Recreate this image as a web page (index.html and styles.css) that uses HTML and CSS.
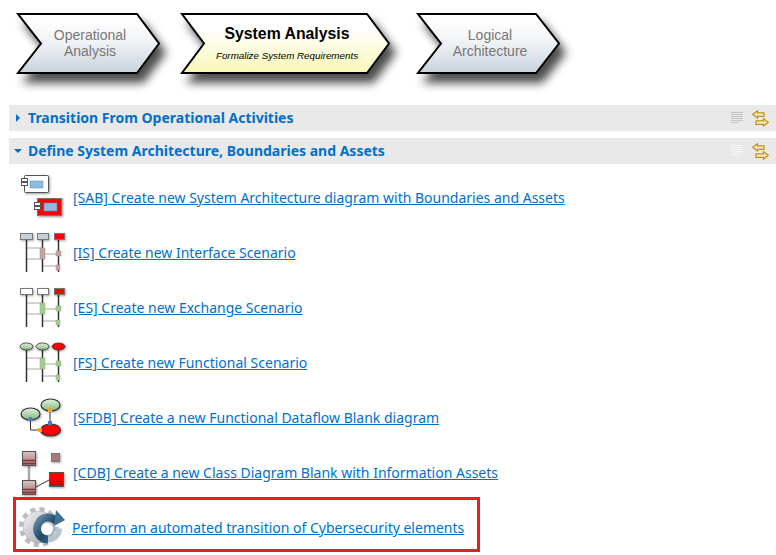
FILE: index.html
```html
<!DOCTYPE html>
<html lang="en">

<head>
    <meta charset="UTF-8">
    <title>System Analysis</title>
    <link rel="stylesheet" href="styles.css">
</head>

<body>
    <!-- shared gradients -->
    <svg class="defs" width="0" height="0">
        <defs>
            <linearGradient id="grey" x1="0" y1="0" x2="0" y2="1">
                <stop offset="0.1" stop-color="#ffffff" />
                <stop offset="0.45" stop-color="#f2f4f7" />
                <stop offset="1" stop-color="#c9d2dc" />
            </linearGradient>
            <linearGradient id="yellow" x1="0" y1="0" x2="0" y2="1">
                <stop offset="0.25" stop-color="#ffffff" />
                <stop offset="1" stop-color="#f9f7b6" />
            </linearGradient>
            <linearGradient id="green" x1="0" y1="0" x2="0" y2="1">
                <stop offset="0" stop-color="#e6f3e0" />
                <stop offset="1" stop-color="#7fb777" />
            </linearGradient>
            <linearGradient id="brown" x1="0" y1="0" x2="0" y2="1">
                <stop offset="0" stop-color="#d9c3c3" />
                <stop offset="1" stop-color="#a06f6f" />
            </linearGradient>
            <linearGradient id="steel" x1="0" y1="0" x2="1" y2="1">
                <stop offset="0" stop-color="#f4f5f6" />
                <stop offset="1" stop-color="#9a9ea4" />
            </linearGradient>
            <linearGradient id="spin" x1="0" y1="0" x2="1" y2="1">
                <stop offset="0" stop-color="#6a8fa8" />
                <stop offset="0.5" stop-color="#1f4a68" />
                <stop offset="1" stop-color="#3f6f92" />
            </linearGradient>
        </defs>
    </svg>

    <div class="stages">
        <svg class="stage" width="143" height="61" viewBox="0 0 143 61">
            <polygon class="chevron" fill="url(#grey)" points="1,1 120,1 142,30.500 120,60 1,60 24,30.500" />
            <text class="stage-name" x="73" y="27">Operational</text>
            <text class="stage-name" x="73" y="43">Analysis</text>
        </svg>
        <svg class="stage" width="209" height="61" viewBox="0 0 209 61">
            <polygon class="chevron" fill="url(#yellow)" points="1,1 186,1 208,30.500 186,60 1,60 23,30.500" />
            <text class="stage-name stage-name--active" x="106" y="26">System Analysis</text>
            <text class="stage-sub" x="106" y="46">Formalize System Requirements</text>
        </svg>
        <svg class="stage" width="143" height="61" viewBox="0 0 143 61">
            <polygon class="chevron" fill="url(#grey)" points="1,1 119,1 142,30.500 119,60 1,60 24,30.500" />
            <text class="stage-name" x="73" y="27">Logical</text>
            <text class="stage-name" x="73" y="43">Architecture</text>
        </svg>
    </div>

    <div class="section">
        <svg class="twistie" width="8" height="10" viewBox="0 0 8 10">
            <polygon points="2,1 6,5 2,9" />
        </svg>
        <span class="section-title">Transition From Operational Activities</span>
        <svg class="lines" width="13" height="12" viewBox="0 0 13 12">
            <path d="M0 .5h12M0 2.500h12M0 4.500h12M0 6.500h12M0 8.500h12M0 10.500h8" />
        </svg>
        <svg class="swap" width="17" height="17" viewBox="0 0 17 17">
            <path d="M.8 4.300 5.500.8v2h6.500v3.500H5.500v1.800z" />
            <path d="M16.200 12.300 11.500 8.800v2H4v3.500h7.500v1.800z" />
        </svg>
    </div>

    <div class="section">
        <svg class="twistie" width="8" height="10" viewBox="0 0 8 10">
            <polygon points="0,3 8,3 4,7" />
        </svg>
        <span class="section-title">Define System Architecture, Boundaries and Assets</span>
        <svg class="lines lines--faded" width="13" height="12" viewBox="0 0 13 12">
            <path d="M0 .5h12M0 2.500h12M0 4.500h12M0 6.500h12M0 8.500h12M0 10.500h8" />
        </svg>
        <svg class="swap" width="17" height="17" viewBox="0 0 17 17">
            <path d="M.8 4.300 5.500.8v2h6.500v3.500H5.500v1.800z" />
            <path d="M16.200 12.300 11.500 8.800v2H4v3.500h7.500v1.800z" />
        </svg>
    </div>

    <ul class="actions">
        <li class="action">
            <svg class="icon" width="52" height="49" viewBox="0 0 52 49">
                <rect class="comp" x="7.500" y="2.500" width="24" height="17" rx="1" fill="#fff" />
                <rect class="comp-inner" x="13" y="8" width="13" height="7" />
                <rect class="comp-tab" x="4.500" y="5.500" width="6" height="3" />
                <rect class="comp-tab" x="4.500" y="9.500" width="6" height="3" />
                <rect class="comp comp--red" x="20.500" y="25.500" width="24" height="17" />
                <rect class="comp-inner" x="27" y="30" width="13" height="8" />
                <rect class="comp-tab" x="17.500" y="29.500" width="6" height="3" />
                <rect class="comp-tab" x="17.500" y="33.500" width="6" height="3" />
            </svg>
            <a href="#">[SAB] Create new System Architecture diagram with Boundaries and Assets</a>
        </li>
        <li class="action">
            <svg class="icon" width="52" height="49" viewBox="0 0 52 49">
                <path class="msg" d="M9.500 20h16M9.500 31h16M25.500 26h16M25.500 38h16" />
                <path class="life" d="M9.500 10v34M25.500 10v34M41.500 10v34" />
                <rect class="head" x="3.500" y="5.500" width="12" height="6" fill="#c6d0d8" />
                <rect class="head" x="20.500" y="5.500" width="11" height="6" fill="#c6d0d8" />
                <rect class="head head--red" x="37.500" y="5.500" width="10" height="6" />
                <rect class="bar bar--brown" x="23" y="20" width="5" height="11" />
                <rect class="bar bar--brown" x="39" y="23" width="5" height="5" />
                <rect class="bar bar--brown" x="39" y="37" width="4" height="5" />
            </svg>
            <a href="#">[IS] Create new Interface Scenario</a>
        </li>
        <li class="action">
            <svg class="icon" width="52" height="49" viewBox="0 0 52 49">
                <path class="msg" d="M9.500 20h16M9.500 31h16M25.500 26h16M25.500 38h16" />
                <path class="life" d="M9.500 10v34M25.500 10v34M41.500 10v34" />
                <rect class="head" x="3.500" y="5.500" width="12" height="6" fill="#fff" />
                <rect class="head" x="20.500" y="5.500" width="11" height="6" fill="#fff" />
                <rect class="head head--red" x="37.500" y="5.500" width="10" height="6" />
                <rect class="bar" x="23" y="20" width="5" height="11" />
                <rect class="bar" x="39" y="23" width="5" height="5" />
                <rect class="bar" x="39" y="37" width="4" height="5" />
            </svg>
            <a href="#">[ES] Create new Exchange Scenario</a>
        </li>
        <li class="action">
            <svg class="icon" width="52" height="49" viewBox="0 0 52 49">
                <path class="msg" d="M9.500 20h16M9.500 31h16M25.500 26h16M25.500 38h16" />
                <path class="life" d="M9.500 10v34M25.500 10v34M41.500 10v34" />
                <ellipse class="oval" cx="9.500" cy="8.500" rx="6.500" ry="3.500" fill="url(#green)" />
                <ellipse class="oval" cx="25.500" cy="8.500" rx="6.500" ry="3.500" fill="url(#green)" />
                <ellipse class="oval" cx="41.500" cy="8.500" rx="6.500" ry="3.500" fill="#f00" />
                <rect class="bar" x="23" y="20" width="5" height="11" />
                <rect class="bar" x="39" y="23" width="5" height="5" />
                <rect class="bar" x="39" y="37" width="4" height="5" />
            </svg>
            <a href="#">[FS] Create new Functional Scenario</a>
        </li>
        <li class="action">
            <svg class="icon" width="52" height="49" viewBox="0 0 52 49">
                <path class="link" d="M13.500 26v11H23M33 17v13" />
                <ellipse class="oval oval--big" cx="13.500" cy="21" rx="9.500" ry="6" fill="url(#green)" />
                <ellipse class="oval oval--big" cx="33.500" cy="12" rx="9.500" ry="6" fill="url(#green)" />
                <ellipse class="oval oval--big" cx="33.500" cy="37" rx="10" ry="6" fill="#f00" />
                <rect class="port port--blue" x="11.500" y="24" width="4" height="4" />
                <rect class="port port--blue" x="31" y="28" width="4" height="4" />
                <rect class="port" x="31" y="15" width="4" height="4" />
                <rect class="port" x="21" y="35" width="4" height="4" />
            </svg>
            <a href="#">[SFDB] Create a new Functional Dataflow Blank diagram</a>
        </li>
        <li class="action">
            <svg class="icon" width="52" height="49" viewBox="0 0 52 49">
                <path class="class-link" d="M12 18v14" />
                <path class="link" d="M19 39 32 32" />
                <rect class="class-box" x="5.500" y="3.500" width="13" height="14" fill="url(#brown)" />
                <path class="class-rows" d="M6 12.500h12M6 15.500h12" />
                <rect class="class-box" x="5.500" y="32.500" width="13" height="14" fill="url(#brown)" />
                <path class="class-rows" d="M6 41.500h12M6 44.500h12" />
                <rect class="class-box class-box--small" x="34.500" y="5.500" width="8" height="8" fill="#a57b7b" />
                <rect class="class-box" x="32.500" y="24.500" width="14" height="14" fill="#f00" />
                <path class="class-rows class-rows--red" d="M33 33.500h13M33 36.500h13" />
            </svg>
            <a href="#">[CDB] Create a new Class Diagram Blank with Information Assets</a>
        </li>
        <li class="action action--marked">
            <svg class="icon" width="52" height="49" viewBox="0 0 52 49">
                <circle class="gear-teeth" cx="22" cy="24" r="17.500" />
                <circle class="gear-body" cx="22" cy="24" r="16" />
                <path class="gear-back" d="M31 36.500A11 11 0 0 0 42 25.500" />
                <path class="gear-spin" d="M31 36.500A11 11 0 1 1 40 19" />
                <polygon class="gear-head" points="39,7 48,17 37,23" />
                <circle class="gear-eye" cx="30" cy="26" r="6" />
            </svg>
            <a href="#">Perform an automated transition of Cybersecurity elements</a>
        </li>
    </ul>
</body>

</html>
```

FILE: styles.css
```css
* {
    margin: 0;
    padding: 0;
}

body {
    background-color: #ffffff;
    font-family: "Noto Sans", "Open Sans", sans-serif;
    overflow: hidden;
}

.defs {
    position: absolute;
}

/* chevrons on top */
.stages {
    display: flex;
    gap: 21px;
    padding: 13px 0 0 17px;
    margin-bottom: 31px;
}

.stage {
    display: block;
    overflow: visible;
}

.stage:nth-child(2) {
    margin-right: 6px;
}

.chevron {
    stroke: #000000;
    stroke-width: 2;
    filter: drop-shadow(6px 9px 5px rgba(0, 0, 0, 0.7));
}

.stage text {
    font-family: "Liberation Sans", Arial, sans-serif;
    text-anchor: middle;
}

.stage-name {
    font-size: 14px;
    fill: #777777;
}

.stage-name--active {
    font-size: 15.800px;
    font-weight: bold;
    fill: #000000;
}

.stage-sub {
    font-size: 9.800px;
    font-style: italic;
    fill: #000000;
}

/* section bars */
.section {
    display: flex;
    align-items: center;
    height: 26px;
    margin: 0 0 7px 9px;
    background-color: #e9e9e9;
}

.section-title {
    flex: 1;
    font-size: 14px;
    font-weight: bold;
    color: #0070cc;
    margin: 0 0 2px 6px;
}

.twistie {
    margin-left: 5px;
    fill: #0070cc;
}

.lines {
    fill: none;
    stroke: #c4c4c4;
    stroke-width: 1;
    margin-right: 8px;
}

.lines--faded {
    stroke: #f4f4f4;
}

.swap {
    fill: #fdeec4;
    stroke: #c98a14;
    stroke-width: 1.200;
    margin-right: 7px;
}

/* action rows */
.actions {
    list-style: none;
    margin-top: -1px;
}

.action {
    display: flex;
    align-items: center;
    height: 55px;
    padding-left: 17px;
    position: relative;
}

.action a {
    margin-left: 4px;
    font-size: 14px;
    color: #0070cc;
}

.action--marked a {
    margin-left: 3px;
}

.icon {
    flex: none;
}

/* box lying over the last row */
.action--marked::after {
    content: "";
    position: absolute;
    left: 13px;
    top: -3px;
    width: 461px;
    height: 49px;
    border: 3px solid #ed1c24;
}

.comp {
    stroke: #555555;
    filter: drop-shadow(1px 1px 1px rgba(0, 0, 0, 0.4));
}

.comp--red {
    fill: #ff0000;
    stroke: #777777;
}

.comp-inner {
    fill: #8dbbdf;
    stroke: #5d8db3;
    stroke-width: 0.5;
}

.comp-tab {
    fill: #ffffff;
    stroke: #555555;
}

.life {
    fill: none;
    stroke: #333333;
    stroke-width: 1.500;
}

.msg {
    fill: none;
    stroke: #a8a8a8;
    stroke-width: 1;
}

.head {
    stroke: #777777;
    filter: drop-shadow(1px 1px 1px rgba(0, 0, 0, 0.35));
}

.head--red {
    fill: #ff0000;
}

.bar {
    fill: #a3cc8e;
    stroke: #8fb07d;
    stroke-width: 0.5;
}

.bar--brown {
    fill: #c4a3a3;
    stroke: #a98a8a;
}

.oval {
    stroke: #333333;
    stroke-width: 0.8;
    filter: drop-shadow(1px 1px 1px rgba(0, 0, 0, 0.35));
}

.oval--big {
    stroke-width: 1.200;
}

.link {
    fill: none;
    stroke: #333333;
    stroke-width: 1;
}

.port {
    fill: #f5a623;
}

.port--blue {
    fill: #4a7fd0;
}

.class-link {
    fill: none;
    stroke: #a8a8a8;
    stroke-width: 2.500;
}

.class-box {
    stroke: #555555;
    filter: drop-shadow(1px 1px 1px rgba(0, 0, 0, 0.35));
}

.class-box--small {
    stroke: #777777;
}

.class-rows {
    fill: none;
    stroke: #853232;
    stroke-width: 1.500;
}

.class-rows--red {
    stroke: #a01010;
}

/* gear with the round arrow */
.gear-teeth {
    fill: none;
    stroke: #b9bcc0;
    stroke-width: 5;
    stroke-dasharray: 5 4.160;
}

.gear-body {
    fill: url(#steel);
    stroke: #a4a8ad;
    stroke-width: 0.5;
}

.gear-spin {
    fill: none;
    stroke: url(#spin);
    stroke-width: 8;
}

.gear-back {
    fill: none;
    stroke: #b5c6d2;
    stroke-width: 6;
}

.gear-head {
    fill: #3f6f92;
}

.gear-eye {
    fill: #ffffff;
}
```
